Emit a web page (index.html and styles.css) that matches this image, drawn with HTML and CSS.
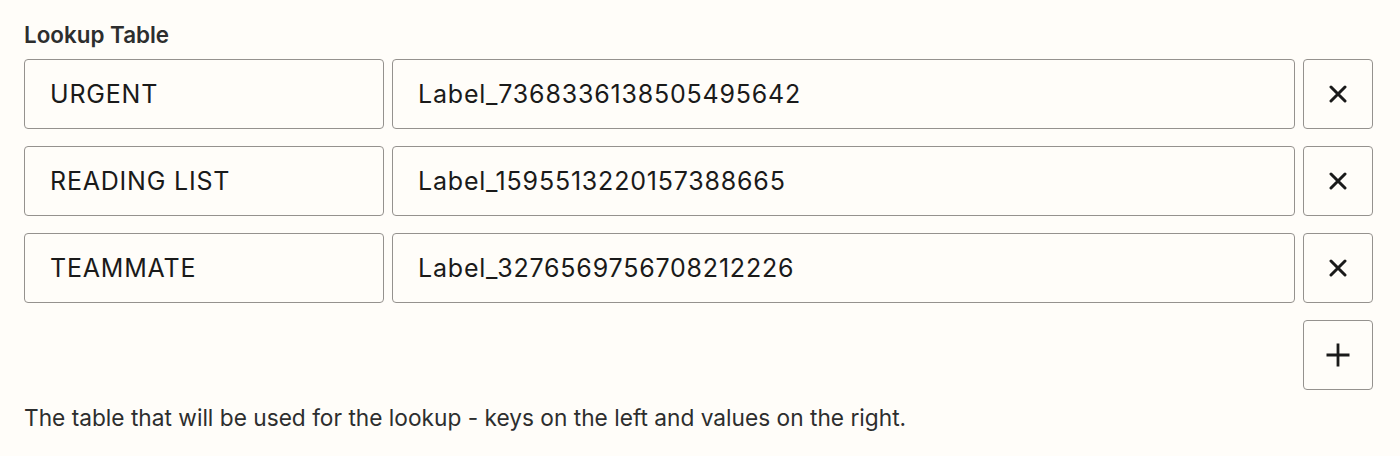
FILE: index.html
```html
<!DOCTYPE html>
<html lang="en">
<head>
<meta charset="utf-8">
<title>Lookup Table</title>
<link rel="stylesheet" href="styles.css">
</head>
<body>
<div class="lookup">
  <label class="lookup-title">Lookup Table</label>
  <div class="rows">
    <div class="row">
      <input class="field" type="text" value="URGENT">
      <input class="field" type="text" value="Label_7368336138505495642">
      <button class="icon-btn" type="button" aria-label="Remove">
        <svg width="18" height="18" viewBox="0 0 18 18"><path d="M2 2L16 16M16 2L2 16" stroke="#1a1a1a" stroke-width="3" stroke-linecap="round" fill="none"/></svg>
      </button>
    </div>
    <div class="row">
      <input class="field" type="text" value="READING LIST">
      <input class="field" type="text" value="Label_1595513220157388665">
      <button class="icon-btn" type="button" aria-label="Remove">
        <svg width="18" height="18" viewBox="0 0 18 18"><path d="M2 2L16 16M16 2L2 16" stroke="#1a1a1a" stroke-width="3" stroke-linecap="round" fill="none"/></svg>
      </button>
    </div>
    <div class="row">
      <input class="field" type="text" value="TEAMMATE">
      <input class="field" type="text" value="Label_3276569756708212226">
      <button class="icon-btn" type="button" aria-label="Remove">
        <svg width="18" height="18" viewBox="0 0 18 18"><path d="M2 2L16 16M16 2L2 16" stroke="#1a1a1a" stroke-width="3" stroke-linecap="round" fill="none"/></svg>
      </button>
    </div>
    <div class="add-row">
      <button class="icon-btn" type="button" aria-label="Add">
        <svg width="24" height="24" viewBox="0 0 24 24"><path d="M12 0.5V23.5M0.5 12H23.5" stroke="#1a1a1a" stroke-width="2.8" fill="none"/></svg>
      </button>
    </div>
  </div>
  <p class="help">The table that will be used for the lookup - keys on the left and values on the right.</p>
</div>
</body>
</html>
```

FILE: styles.css
```css
html, body {
  margin: 0;
  background: #fffdf9;
}

body {
  font-family: Inter, "Noto Sans", "Liberation Sans", sans-serif;
  color: #1f1f1f;
}

.lookup {
  padding: 21px 27px 0 24px;
}

.lookup-title {
  display: block;
  font-size: 22.4px;
  line-height: 28px;
  font-weight: 600;
  color: #2d2e2e;
  margin-bottom: 10px;
}

.rows {
  display: flex;
  flex-direction: column;
  gap: 17px;
}

.row {
  display: grid;
  grid-template-columns: 360px 1fr 70px;
  gap: 8px;
}

.field {
  box-sizing: border-box;
  height: 70px;
  margin: 0;
  padding: 0 25px;
  border: 1px solid #95928e;
  border-radius: 4px;
  background: #fffdf9;
  font-family: inherit;
  font-size: 25px;
  letter-spacing: 0.8px;
  color: #1a1a1a;
  outline: none;
  min-width: 0;
}

.icon-btn {
  box-sizing: border-box;
  width: 70px;
  height: 70px;
  margin: 0;
  padding: 0;
  border: 1px solid #95928e;
  border-radius: 4px;
  background: #fffdf9;
  display: flex;
  align-items: center;
  justify-content: center;
  cursor: pointer;
}

.add-row {
  display: flex;
  justify-content: flex-end;
}

.help {
  margin: 13px 0 0;
  font-size: 22.7px;
  line-height: 30px;
  color: #2d2e2e;
}
```
